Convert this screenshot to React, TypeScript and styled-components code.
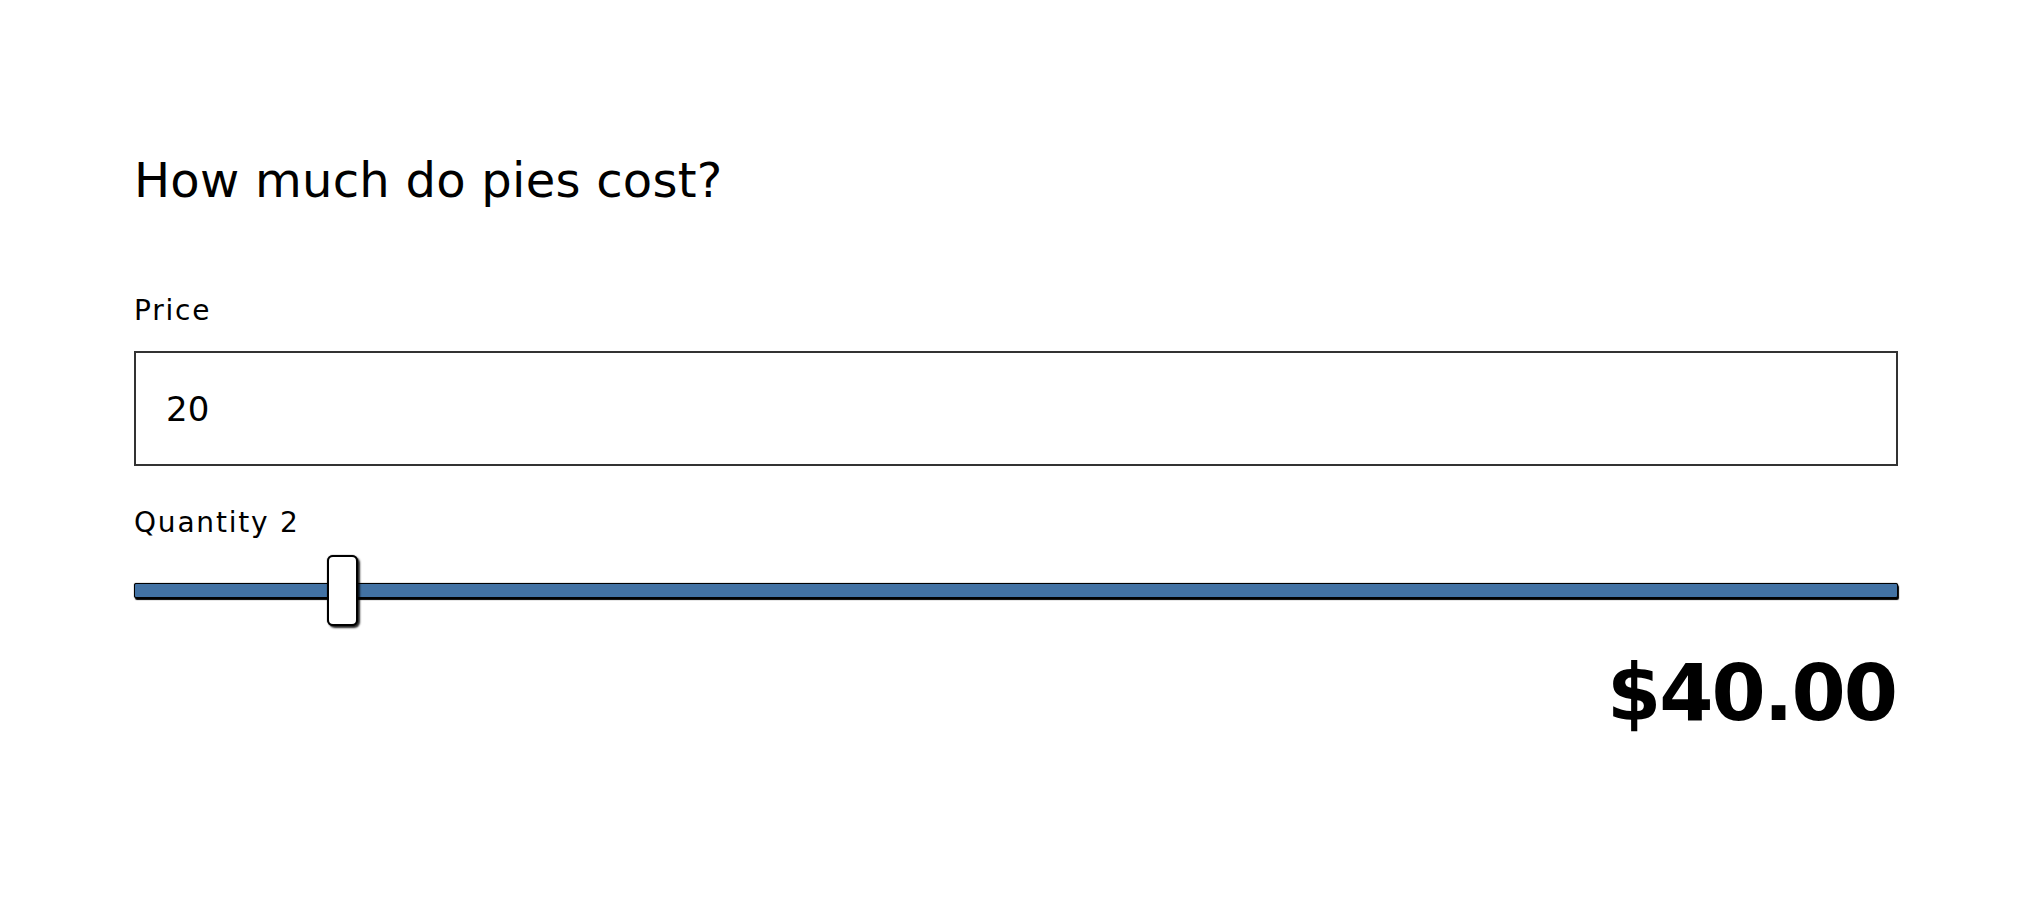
import React, { useState } from "react";
import styled, { createGlobalStyle } from "styled-components";

const Global = createGlobalStyle`
  html, body { margin: 0; padding: 0; background: #ffffff; }
  body { font-family: "DejaVu Sans", "Liberation Sans", sans-serif; color: #000; }
  * { box-sizing: border-box; }
`;

const Page = styled.main`
  padding: 156px 124px 80px 134px;
  display: flex;
  flex-direction: column;
`;

const Title = styled.h1`
  margin: 0 0 93px;
  font-family: "DejaVu Sans", sans-serif;
  font-weight: 400;
  font-size: 48px;
  line-height: 1;
  letter-spacing: 0.25px;
`;

const Label = styled.label<{ $gap: number }>`
  display: block;
  font-size: 28px;
  line-height: 1;
  letter-spacing: 1.8px;
  margin: 0 0 ${(p) => p.$gap}px;
`;

const PriceInput = styled.input`
  display: block;
  width: 100%;
  height: 115px;
  margin: 0 0 43px;
  padding: 0 30px;
  border: 2px solid #333333;
  border-radius: 0;
  font-family: "DejaVu Sans", sans-serif;
  font-size: 34px;
  color: #000;
  outline: none;
  background: #fff;
`;

const Range = styled.input`
  -webkit-appearance: none;
  appearance: none;
  display: block;
  width: 100%;
  height: 71px;
  margin: 0 0 28px;
  padding: 0;
  background: transparent;

  &:focus { outline: none; }

  &::-webkit-slider-runnable-track {
    height: 15px;
    background: #4272a4;
    border: 1px solid #010101;
    border-radius: 2px;
    box-shadow: 1px 2px 1px #000000, 0 0 1px #0d0d0d;
  }

  &::-webkit-slider-thumb {
    -webkit-appearance: none;
    appearance: none;
    width: 31px;
    height: 71px;
    margin-top: -29px;
    background: #ffffff;
    border: 2px solid #000000;
    border-radius: 6px;
    box-shadow: 2px 2px 2px rgba(0, 0, 0, 0.85), 0 0 1px #0d0d0d;
    cursor: pointer;
  }
`;

const Total = styled.output`
  display: block;
  text-align: right;
  font-family: "DejaVu Sans", sans-serif;
  font-weight: 700;
  font-size: 78px;
  line-height: 1;
  letter-spacing: -2px;
  margin-right: 2px;
`;

export default function App() {
  const [price, setPrice] = useState("20");
  const [qty, setQty] = useState(2);
  const total = (parseFloat(price) || 0) * qty;
  return (
    <>
      <Global />
      <Page>
        <Title>How much do pies cost?</Title>
        <Label $gap={26} htmlFor="price">Price</Label>
        <PriceInput
          id="price"
          type="text"
          value={price}
          onChange={(e) => setPrice(e.target.value)}
        />
        <Label $gap={18} htmlFor="qty">Quantity {qty}</Label>
        <Range
          id="qty"
          type="range"
          min={1}
          max={10}
          value={qty}
          onChange={(e) => setQty(Number(e.target.value))}
        />
        <Total>${total.toFixed(2)}</Total>
      </Page>
    </>
  );
}
